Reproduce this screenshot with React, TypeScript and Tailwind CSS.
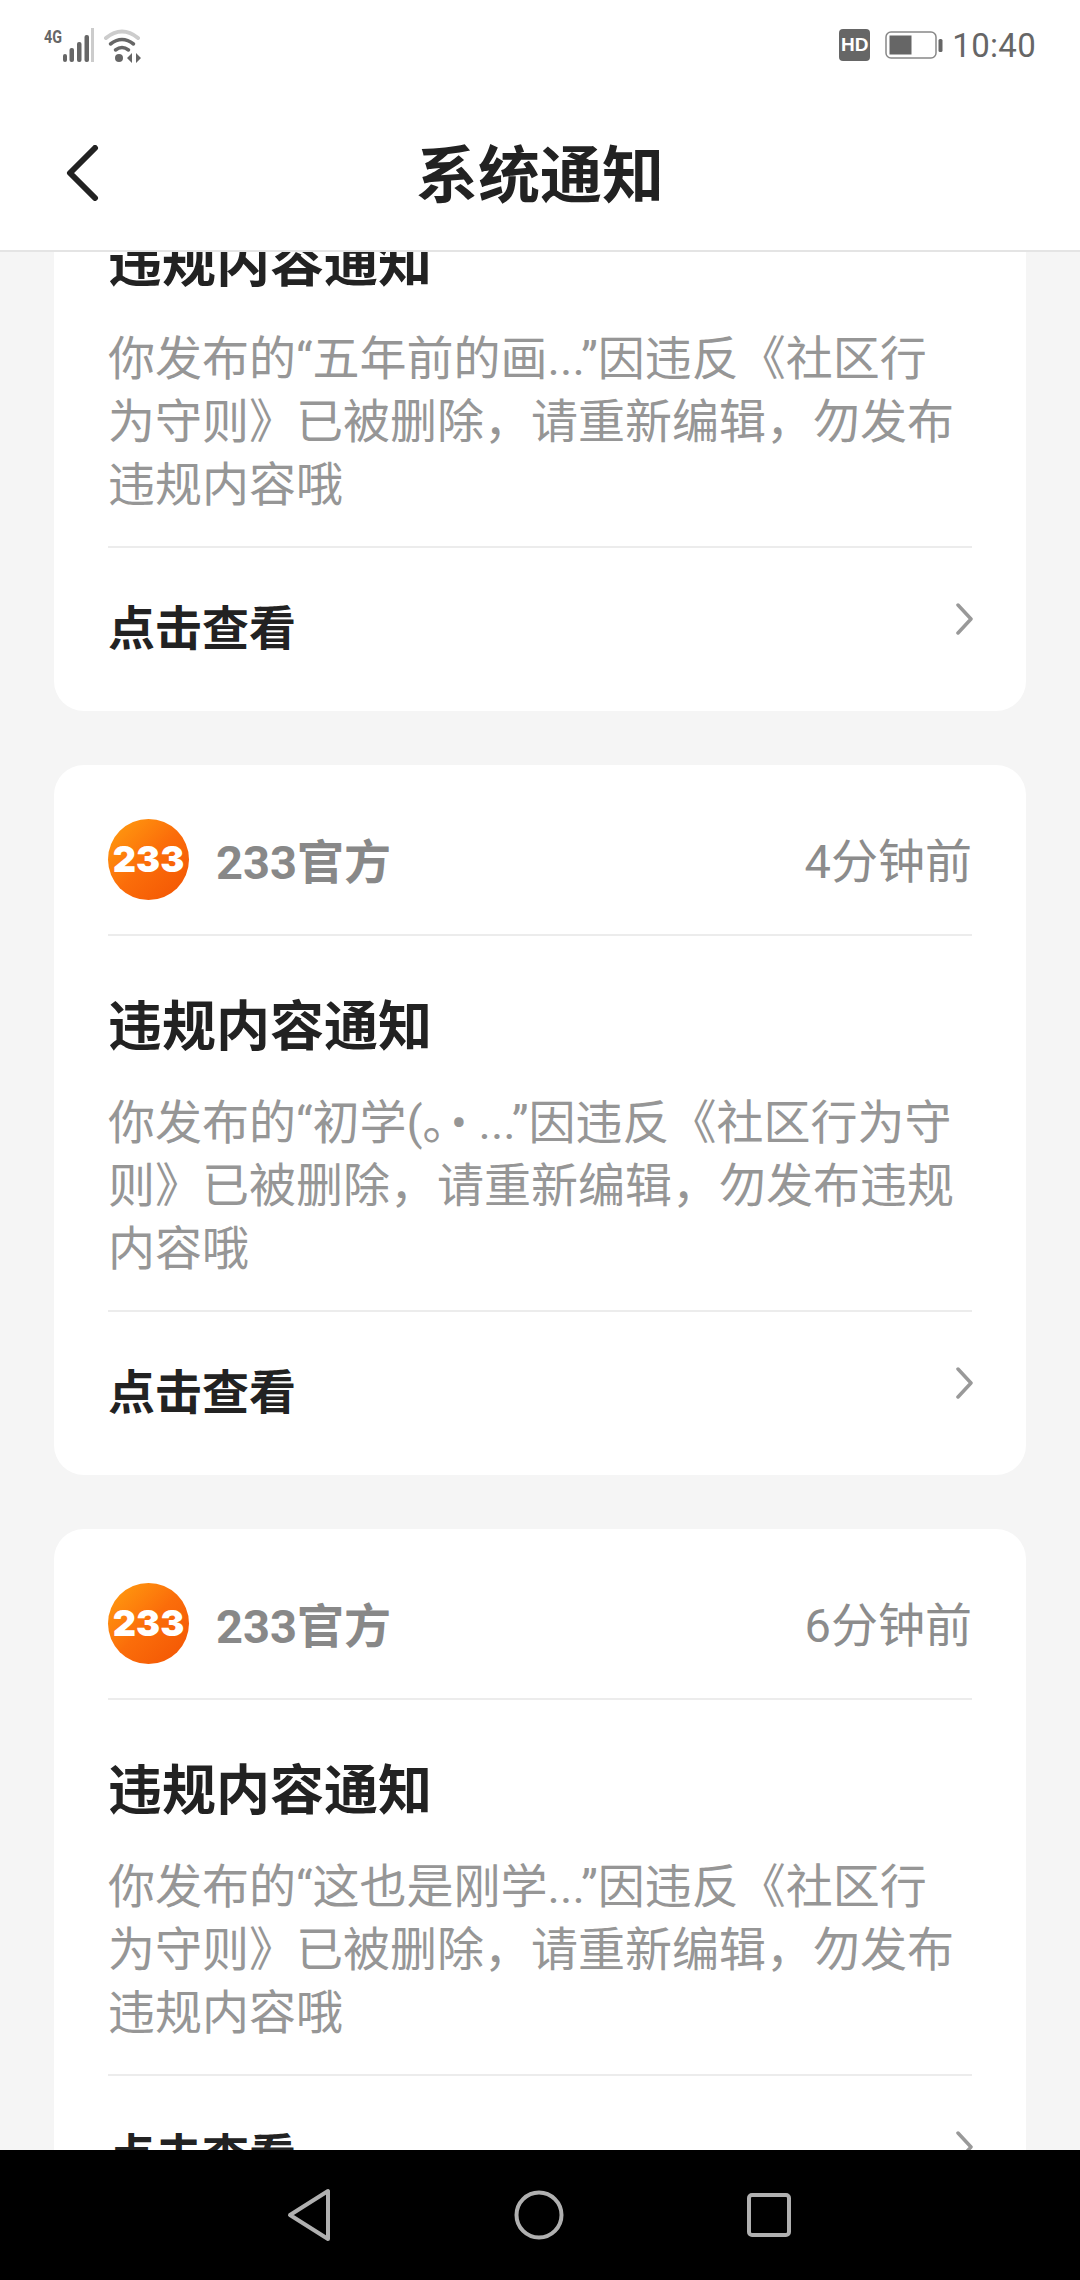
import React from "react";

const cjk = { fontFamily: '"Roboto", "Noto Sans CJK SC", sans-serif' };

function Chevron() {
  return (
    <svg width="20" height="32" viewBox="0 0 20 32" fill="none" className="-mr-[3px] -mt-[22px]">
      <path d="M3 2l13 14L3 30" stroke="#999" strokeWidth="3.500" strokeLinecap="round" strokeLinejoin="round" />
    </svg>
  );
}

function Logo() {
  return (
    <div className="w-[81px] h-[81px] mt-[2px] rounded-full bg-gradient-to-br from-[#ff9f10] via-[#fb6d0a] to-[#f25304] flex items-center justify-center shrink-0">
      <span className="text-white text-[36px] font-black leading-none" style={{ fontFamily: '"Inter", sans-serif' }}>233</span>
    </div>
  );
}

function Card({ time, lines, showHeader = true }: { time?: string; lines: string[]; showHeader?: boolean }) {
  return (
    <div className={`bg-white rounded-[30px] px-[54px] mx-[54px] mb-[54px] flex flex-col shrink-0 ${showHeader ? "h-[710px]" : "h-[539px]"}`}>
      {showHeader && (
        <div className="h-[171px] pt-[17px] border-b-2 border-[#ececec] flex items-center justify-between">
          <div className="flex items-center gap-[27px]">
            <Logo />
            <span className="text-[47px] font-bold text-[#888888] pt-[11px]">233官方</span>
          </div>
          <span className="text-[47px] text-[#8c8c8c] pt-[9px]">{time}</span>
        </div>
      )}
      <div className="pt-[59px] text-[54px] leading-[65px] font-bold text-[#222222]">违规内容通知</div>
      <div className="pt-[31px] h-[252px] flex-none border-b-2 border-[#ececec] text-[47px] leading-[63px] text-[#969696]">
        {lines.map((l) => (
          <div key={l} className="whitespace-nowrap">{l}</div>
        ))}
      </div>
      <div className="flex-1 flex items-center justify-between">
        <span className="text-[47px] font-bold text-[#222222]">点击查看</span>
        <Chevron />
      </div>
    </div>
  );
}

export default function App() {
  return (
    <div className="w-[1080px] h-[2280px] flex flex-col bg-[#f5f5f5] overflow-hidden" style={cjk}>
      <div className="h-[252px] shrink-0 bg-white border-b-2 border-[#e4e4e4] flex flex-col z-10">
        <div className="h-[90px] px-[44px] flex items-center justify-between">
          <div className="flex items-center gap-[8px]">
            <svg width="100" height="36" viewBox="0 0 100 36">
              <text x="0" y="16" fontSize="19" fontWeight="700" fill="#666" textLength="18" lengthAdjust="spacingAndGlyphs" fontFamily="Roboto, sans-serif">4G</text>
              <rect x="19" y="27" width="4" height="8" rx="2" fill="#666" />
              <rect x="25.5" y="21" width="4.5" height="14" rx="2" fill="#666" />
              <rect x="33" y="15" width="4.5" height="20" rx="2" fill="#666" />
              <rect x="40.5" y="8" width="4.5" height="27" rx="2" fill="#666" />
              <rect x="47" y="1" width="3" height="34" fill="#ccc" />
              <path d="M62 11q16-13 32 0" stroke="#ccc" strokeWidth="4" fill="none" strokeLinecap="round" />
              <path d="M66.5 17q11.500-9 23 0" stroke="#666" strokeWidth="3.500" fill="none" strokeLinecap="round" />
              <path d="M71.500 23q6.500-5 13 0" stroke="#666" strokeWidth="3.500" fill="none" strokeLinecap="round" />
              <circle cx="75" cy="31" r="4" fill="#666" />
              <path d="M83 31l5-5v10zM92 26v10l5-5z" fill="#666" />
            </svg>
          </div>
          <div className="flex items-center text-[#666666]">
            <div className="w-[31px] h-[32px] rounded-[4px] bg-[#666666] text-white text-[19px] font-bold flex items-center justify-center mr-[15px]" style={{ fontFamily: '"Liberation Sans", sans-serif' }}>HD</div>
            <svg width="58" height="28" viewBox="0 0 58 28" className="mr-[9px]">
              <rect x="1" y="1" width="50" height="26" rx="5" fill="none" stroke="#888" strokeWidth="1.500" />
              <rect x="4.500" y="4.500" width="22" height="19" fill="#666" />
              <rect x="53.500" y="8" width="4" height="13" rx="1.500" fill="#666" />
            </svg>
            <span className="text-[33px] tracking-[0.3px] leading-none">10:40</span>
          </div>
        </div>
        <div className="relative flex-1 flex items-center justify-center">
          <svg width="34" height="56" viewBox="0 0 34 56" fill="none" className="absolute left-[65px] top-[55px]">
            <path d="M30 3L5 28l25 25" stroke="#222" strokeWidth="6" strokeLinecap="round" strokeLinejoin="round" />
          </svg>
          <span className="text-[62px] font-bold text-[#222222] leading-none mt-[14px]">系统通知</span>
        </div>
      </div>
      <div className="flex-1 min-h-0 overflow-hidden">
        <div className="flex flex-col -mt-[80px]">
          <Card showHeader={false} lines={["你发布的“五年前的画...”因违反《社区行", "为守则》已被删除，请重新编辑，勿发布", "违规内容哦"]} />
          <Card time="4分钟前" lines={["你发布的“初学(｡\u200a• ...”因违反《社区行为守", "则》已被删除，请重新编辑，勿发布违规", "内容哦"]} />
          <Card time="6分钟前" lines={["你发布的“这也是刚学...”因违反《社区行", "为守则》已被删除，请重新编辑，勿发布", "违规内容哦"]} />
        </div>
      </div>
      <div className="h-[130px] shrink-0 bg-black relative z-10 flex items-center justify-center gap-[183px]">
        <svg width="44" height="54" viewBox="0 0 44 54" fill="none" className="-ml-[3px]">
          <path d="M41 3v48L3 27z" stroke="#b0b0b0" strokeWidth="4" strokeLinejoin="round" />
        </svg>
        <svg width="50" height="50" viewBox="0 0 50 50" fill="none">
          <circle cx="25" cy="25" r="22.500" stroke="#b0b0b0" strokeWidth="4" />
        </svg>
        <svg width="44" height="44" viewBox="0 0 44 44" fill="none">
          <rect x="2" y="2" width="40" height="40" rx="3" stroke="#b0b0b0" strokeWidth="4" />
        </svg>
      </div>
    </div>
  );
}
